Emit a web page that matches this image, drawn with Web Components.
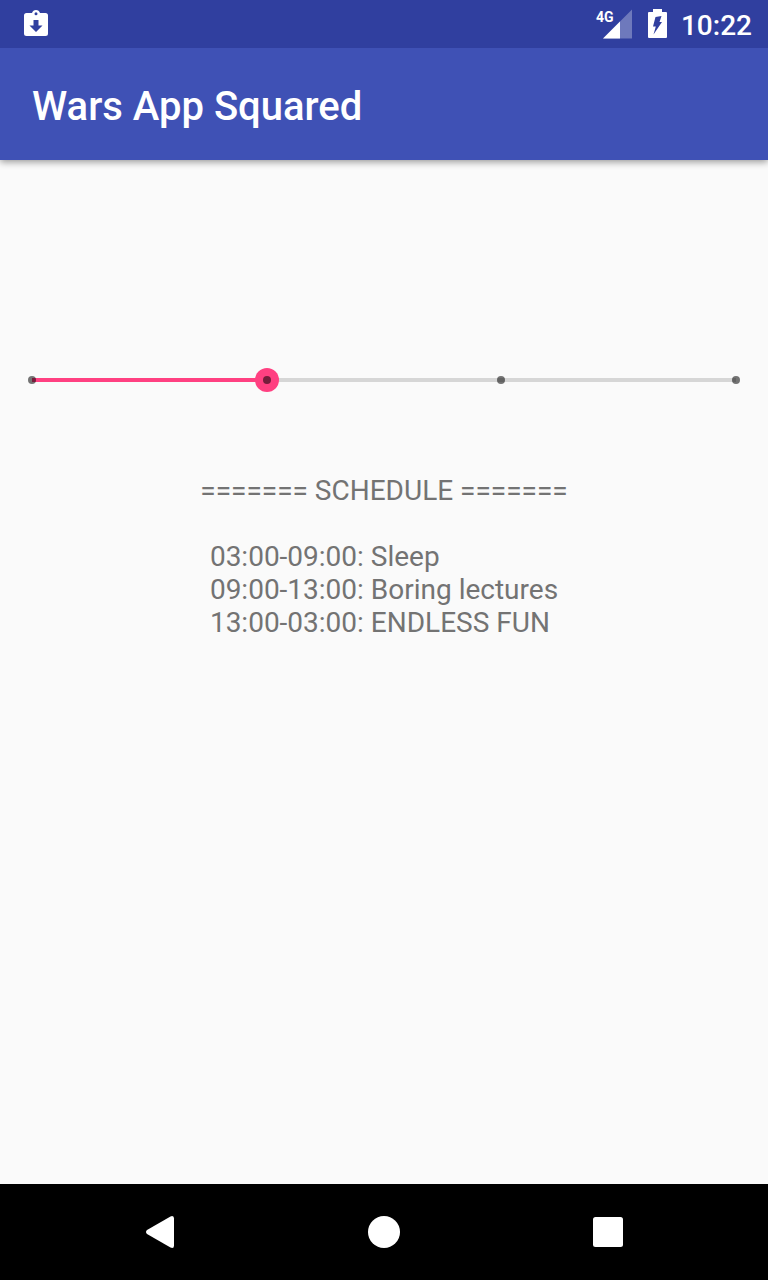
<!DOCTYPE html>
<html lang="en">
<head>
<meta charset="utf-8">
<meta name="viewport" content="width=device-width, initial-scale=1">
<title>Wars App Squared</title>
<style>
  html, body { margin: 0; height: 100%; }
  body { font-family: Roboto, sans-serif; background: #fafafa; }
</style>
</head>
<body>
<wars-screen>
  <status-bar slot="top" time="10:22" network="4G"></status-bar>
  <app-bar slot="top">Wars App Squared</app-bar>
  <step-slider label="Schedule step" max="3" value="1"></step-slider>
  <schedule-text heading="======= SCHEDULE =======">
    <span>03:00-09:00: Sleep</span>
    <span>09:00-13:00: Boring lectures</span>
    <span>13:00-03:00: ENDLESS FUN</span>
  </schedule-text>
  <nav-bar slot="bottom"></nav-bar>
</wars-screen>
<script>
class WarsScreen extends HTMLElement {
  constructor() {
    super();
    this.attachShadow({ mode: 'open' }).innerHTML = `
      <style>
        :host { display: flex; flex-direction: column; min-height: 100vh; background: #fafafa; }
        main { flex: 1; display: flex; flex-direction: column; gap: 82px; padding: 208px 20px 32px; }
      </style>
      <slot name="top"></slot>
      <main><slot></slot></main>
      <slot name="bottom"></slot>`;
  }
}

class StatusBar extends HTMLElement {
  connectedCallback() {
    this.attachShadow({ mode: 'open' }).innerHTML = `
      <style>
        :host { display: flex; justify-content: space-between; align-items: center; box-sizing: border-box;
          height: 48px; padding: 0 16px 0 24px; background: #303f9f; color: #fff; position: relative; z-index: 1; }
        svg { display: block; }
        .right { display: flex; align-items: center; }
        .signal { position: relative; width: 36px; height: 30px; margin-right: 16px; }
        .signal svg { margin-left: 7px; }
        .network { position: absolute; left: 0; top: 0; font-size: 14px; line-height: 16px; font-weight: 700; }
        .battery { margin-right: 14px; }
        time { font-size: 28px; line-height: 33px; font-weight: 500; padding-top: 2px; }
      </style>
      <svg width="24" height="28" viewBox="0 0 24 28" fill="#fff" role="img" aria-label="Download complete">
        <path fill-rule="evenodd" d="M2.500 3H8A4.200 4.200 0 0 1 16 3H21.500A2.500 2.500 0 0 1 24 5.500V23.500A2.500 2.500 0 0 1 21.500 26H2.500A2.500 2.500 0 0 1 0 23.500V5.500A2.500 2.500 0 0 1 2.500 3ZM12 2.200A1.500 1.500 0 1 0 12 5.200A1.500 1.500 0 1 0 12 2.200ZM9.500 10V15.500H5.500L12 22L18.500 15.500H14.500V10Z"/>
      </svg>
      <div class="right">
        <div class="signal">
          <span class="network"></span>
          <svg width="29" height="30" viewBox="0 0 29 30" aria-hidden="true">
            <path d="M0 29.500L29 .500V29.500Z" fill="#fff" fill-opacity=".3"/>
            <path d="M0 29.500L17 12.500V29.500Z" fill="#fff"/>
          </svg>
        </div>
        <svg class="battery" width="19" height="30" viewBox="0 0 19 30" role="img" aria-label="Battery charging">
          <path fill="#fff" d="M5 0H14V3H18Q19 3 19 4V28Q19 29 18 29H1Q0 29 0 28V4Q0 3 1 3H5Z"/>
          <path fill="#303f9f" d="M7.500 8L13.500 7L11.500 13H14L5.500 25.500L7.800 17.500H5Z"/>
        </svg>
        <time></time>
      </div>`;
    this.shadowRoot.querySelector('time').textContent = this.getAttribute('time');
    this.shadowRoot.querySelector('.network').textContent = this.getAttribute('network');
  }
}

class AppBar extends HTMLElement {
  constructor() {
    super();
    this.attachShadow({ mode: 'open' }).innerHTML = `
      <style>
        :host { display: block; background: #3f51b5; color: #fff; box-shadow: 0 2px 7px rgba(0, 0, 0, .4); }
        header { display: flex; align-items: center; box-sizing: border-box; height: 112px; padding: 6px 32px 0; }
        h1 { margin: 0; font-size: 40px; line-height: 48px; font-weight: 500; }
      </style>
      <header><h1><slot></slot></h1></header>`;
  }
}

class StepSlider extends HTMLElement {
  connectedCallback() {
    const max = Number(this.getAttribute('max'));
    this.attachShadow({ mode: 'open' }).innerHTML = `
      <style>
        :host { display: grid; align-items: center; height: 24px; }
        input, .track, .ticks { grid-area: 1 / 1; }
        .track { height: 4px; margin: 0 12px;
          background: linear-gradient(to right, #ff4081 var(--fill), #d6d6d6 var(--fill)); }
        input { appearance: none; -webkit-appearance: none; width: 100%; height: 24px; margin: 0;
          background: transparent; position: relative; }
        input::-webkit-slider-runnable-track { height: 24px; background: transparent; }
        input::-webkit-slider-thumb { -webkit-appearance: none; width: 24px; height: 24px;
          border-radius: 50%; background: #ff4081; }
        .ticks { display: flex; justify-content: space-between; margin: 0 8px; position: relative; pointer-events: none; }
        .ticks i { width: 8px; height: 8px; border-radius: 50%; background: rgba(0, 0, 0, .54); }
      </style>
      <div class="track"></div>
      <input type="range" min="0" max="${max}" step="1" value="${this.getAttribute('value')}" aria-label="${this.getAttribute('label')}">
      <div class="ticks" aria-hidden="true">${'<i></i>'.repeat(max + 1)}</div>`;
    const input = this.shadowRoot.querySelector('input');
    const update = () => this.style.setProperty('--fill', `${input.value / max * 100}%`);
    input.addEventListener('input', update);
    update();
  }
}

class ScheduleText extends HTMLElement {
  connectedCallback() {
    this.attachShadow({ mode: 'open' }).innerHTML = `
      <style>
        :host { display: flex; flex-direction: column; align-items: center; gap: 33px;
          color: #737373; font-size: 28px; line-height: 33px; }
        h2 { margin: 0; font: inherit; }
        .entries { display: flex; flex-direction: column; }
      </style>
      <h2></h2>
      <div class="entries"><slot></slot></div>`;
    this.shadowRoot.querySelector('h2').textContent = this.getAttribute('heading');
  }
}

class NavBar extends HTMLElement {
  constructor() {
    super();
    this.attachShadow({ mode: 'open' }).innerHTML = `
      <style>
        :host { display: block; background: #000; }
        nav { display: flex; height: 96px; padding: 0 48px; }
        button { flex: 1; display: flex; align-items: center; justify-content: center;
          padding: 0; border: 0; background: none; color: #fff; }
        svg { display: block; fill: #fff; }
      </style>
      <nav aria-label="System">
        <button type="button" aria-label="Back"><svg width="32" height="32" viewBox="0 0 32 32"><path d="M26.500 .400Q30 -1 30 2.500V29.500Q30 33 26.500 31.600L3 18Q1 16 3 14Z"/></svg></button>
        <button type="button" aria-label="Home"><svg width="32" height="32" viewBox="0 0 32 32"><circle cx="16" cy="16" r="16"/></svg></button>
        <button type="button" aria-label="Recent apps"><svg width="32" height="32" viewBox="0 0 32 32"><rect x="1" y="1" width="30" height="30" rx="2.500"/></svg></button>
      </nav>`;
  }
}

customElements.define('wars-screen', WarsScreen);
customElements.define('status-bar', StatusBar);
customElements.define('app-bar', AppBar);
customElements.define('step-slider', StepSlider);
customElements.define('schedule-text', ScheduleText);
customElements.define('nav-bar', NavBar);
</script>
</body>
</html>
